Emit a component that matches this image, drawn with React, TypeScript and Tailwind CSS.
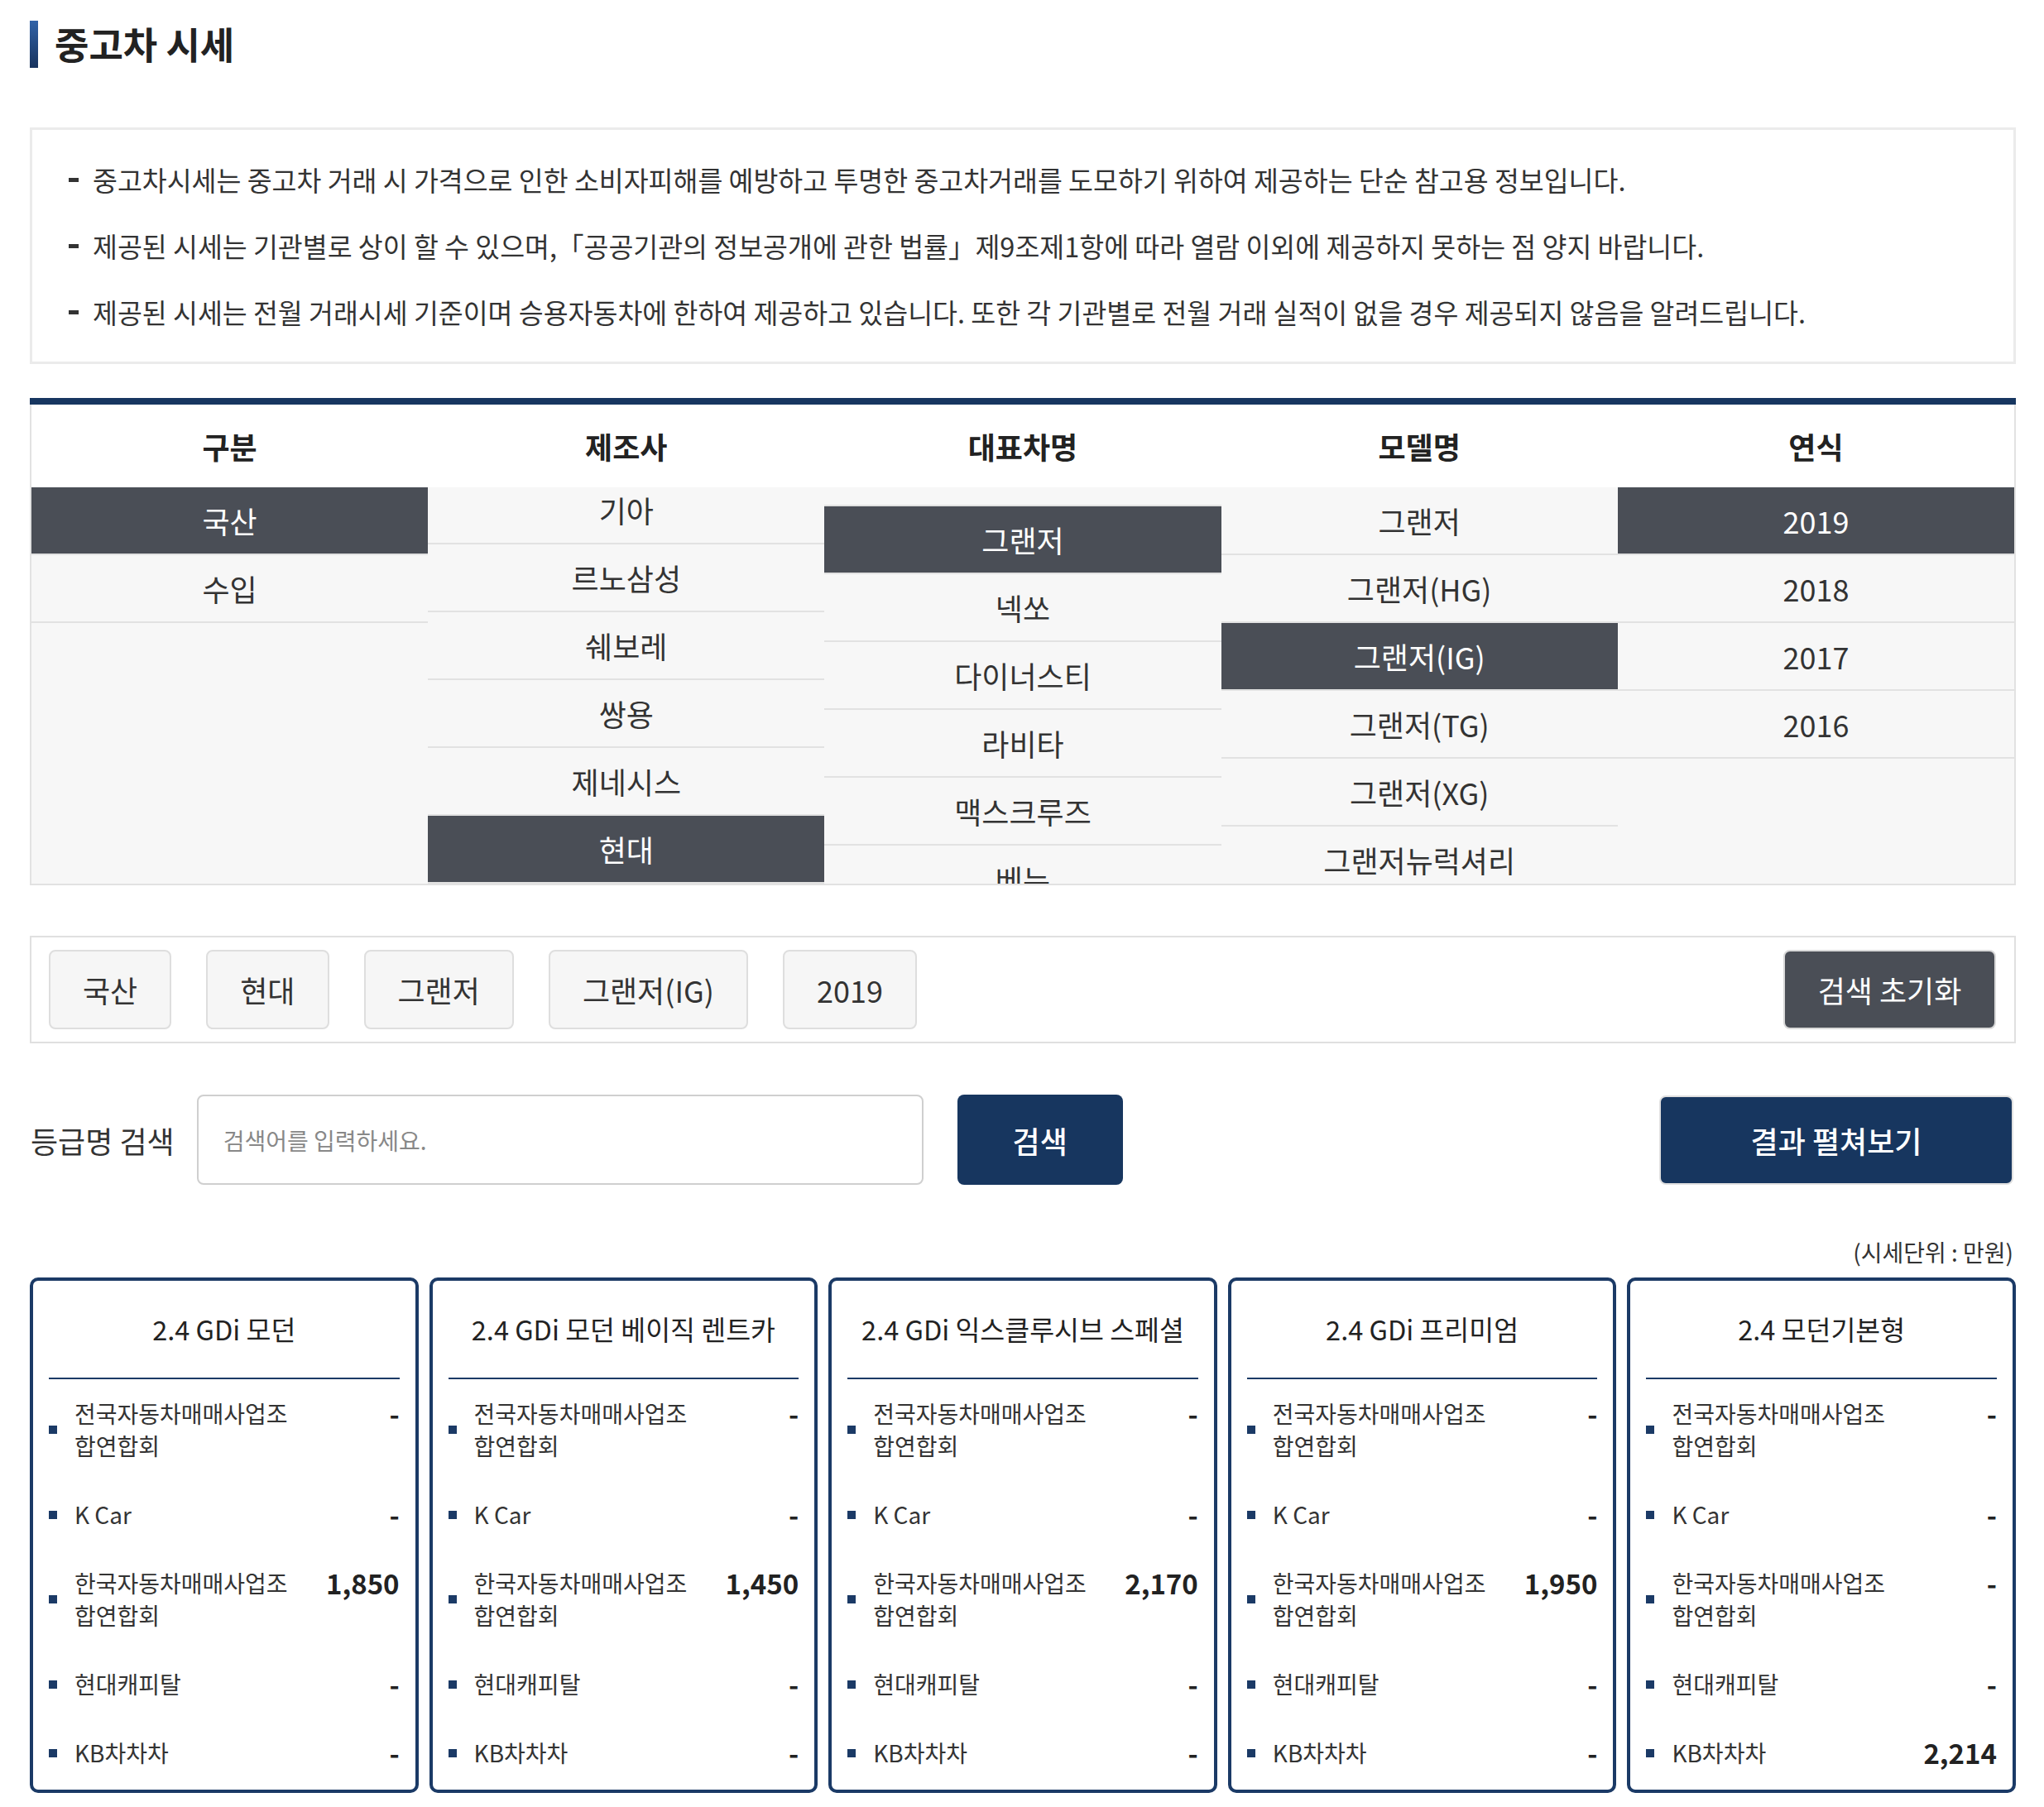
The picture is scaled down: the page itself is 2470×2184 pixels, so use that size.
import React from "react";

type Col = { title: string; offset: string; items: string[]; selected: string };

const columns: Col[] = [
  { title: "구분", offset: "mt-0", items: ["국산", "수입"], selected: "국산" },
  { title: "제조사", offset: "-mt-[13px]", items: ["기아", "르노삼성", "쉐보레", "쌍용", "제네시스", "현대"], selected: "현대" },
  {
    title: "대표차명",
    offset: "-mt-[59px]",
    items: ["그랜드스타렉스", "그랜저", "넥쏘", "다이너스티", "라비타", "맥스크루즈", "베뉴"],
    selected: "그랜저",
  },
  {
    title: "모델명",
    offset: "mt-0",
    items: ["그랜저", "그랜저(HG)", "그랜저(IG)", "그랜저(TG)", "그랜저(XG)", "그랜저뉴럭셔리"],
    selected: "그랜저(IG)",
  },
  { title: "연식", offset: "mt-0", items: ["2019", "2018", "2017", "2016"], selected: "2019" },
];

const notices = [
  "중고차시세는 중고차 거래 시 가격으로 인한 소비자피해를 예방하고 투명한 중고차거래를 도모하기 위하여 제공하는 단순 참고용 정보입니다.",
  "제공된 시세는 기관별로 상이 할 수 있으며,「공공기관의 정보공개에 관한 법률」제9조제1항에 따라 열람 이외에 제공하지 못하는 점 양지 바랍니다.",
  "제공된 시세는 전월 거래시세 기준이며 승용자동차에 한하여 제공하고 있습니다. 또한 각 기관별로 전월 거래 실적이 없을 경우 제공되지 않음을 알려드립니다.",
];

const chips = ["국산", "현대", "그랜저", "그랜저(IG)", "2019"];

const sources = ["전국자동차매매사업조합연합회", "K Car", "한국자동차매매사업조합연합회", "현대캐피탈", "KB차차차"];

const cards = [
  { title: "2.4 GDi 모던", values: ["-", "-", "1,850", "-", "-"] },
  { title: "2.4 GDi 모던 베이직 렌트카", values: ["-", "-", "1,450", "-", "-"] },
  { title: "2.4 GDi 익스클루시브 스페셜", values: ["-", "-", "2,170", "-", "-"] },
  { title: "2.4 GDi 프리미엄", values: ["-", "-", "1,950", "-", "-"] },
  { title: "2.4 모던기본형", values: ["-", "-", "-", "-", "2,214"] },
];

export default function App() {
  return (
    <div className="w-[2470px] min-h-[2184px] bg-white font-['Noto_Sans_CJK_KR','Noto_Sans',sans-serif] text-[#333]">
      <div className="ml-[36px] w-[2400px] pt-[25px] pb-[14px]">
        {/* Title */}
        <div className="flex items-center h-[57px]">
          <div className="w-[10px] h-[57px] bg-linear-to-b from-[#3163a8] to-[#18335e]" />
          <h1 className="ml-[20px] -mt-[2px] text-[45px] font-bold leading-none text-[#222]">중고차 시세</h1>
        </div>

        {/* Notice */}
        <div className="mt-[72px] border-[3px] border-[#ebebeb] px-[44px] py-[20px]">
          {notices.map((n) => (
            <div key={n} className="flex items-center leading-[80px] text-[32.5px]">
              <span className="w-[12px] h-[5px] bg-[#333] shrink-0" />
              <span className="ml-[17px]">{n}</span>
            </div>
          ))}
        </div>

        {/* Category selector */}
        <div className="mt-[41px]">
          <div className="h-[8px] bg-[#173660]" />
          <div className="border-x-2 border-b-2 border-[#e2e2e2]">
            <div className="grid grid-cols-5 h-[100px] bg-white">
              {columns.map((c) => (
                <div key={c.title} className="flex items-center justify-center text-[36px] font-bold text-[#222] leading-none">
                  {c.title}
                </div>
              ))}
            </div>
            <div className="grid grid-cols-5 h-[479px] bg-[#f7f7f7]">
              {columns.map((c) => (
                <div key={c.title} className="overflow-hidden">
                  <div className={c.offset}>
                    {c.items.map((it) => (
                      <div
                        key={it}
                        className={
                          it === c.selected
                            ? "h-[82px] border-b-2 border-[#e2e2e2] bg-[#4a4e56] text-white flex items-center justify-center text-[36px] leading-none"
                            : "h-[82px] border-b-2 border-[#e2e2e2] text-[#333] flex items-center justify-center text-[36px] leading-none"
                        }
                      >
                        {it}
                      </div>
                    ))}
                  </div>
                </div>
              ))}
            </div>
          </div>
        </div>

        {/* Selected chips */}
        <div className="mt-[61px] h-[130px] border-2 border-[#e0e0e0] flex items-center justify-between pl-[21px] pr-[22px]">
          <div className="flex gap-[42px]">
            {chips.map((c) => (
              <div
                key={c}
                className="h-[96px] px-[39px] rounded-[8px] border-2 border-[#dedede] bg-[#f6f6f6] flex items-center text-[36px] leading-none text-[#333]"
              >
                {c}
              </div>
            ))}
          </div>
          <button className="h-[96px] w-[257px] rounded-[8px] border-2 border-[#d9d9d9] bg-[#4a4e56] text-white text-[36px] leading-none">
            검색 초기화
          </button>
        </div>

        {/* Search */}
        <div className="mt-[62px] flex items-center h-[109px]">
          <span className="text-[36px] leading-none text-[#333] ml-[1px]">등급명 검색</span>
          <input
            className="ml-[27px] w-[878px] h-[109px] border-2 border-[#cfcfcf] rounded-[8px] px-[30px] text-[28px] outline-none placeholder:text-[#888]"
            placeholder="검색어를 입력하세요."
          />
          <button className="ml-[41px] w-[200px] h-[109px] rounded-[8px] bg-[#17365f] text-white text-[36px] font-medium leading-none">
            검색
          </button>
          <button className="ml-auto mr-[3px] w-[428px] h-[108px] rounded-[8px] border-2 border-[#e0e0e0] bg-[#17365f] text-white text-[36px] font-medium leading-none">
            결과 펼쳐보기
          </button>
        </div>

        <div className="mt-[63px] pr-[3px] text-right text-[28px] leading-[36px] text-[#333]">(시세단위 : 만원)</div>

        {/* Cards */}
        <div className="mt-[13px] grid grid-cols-5 gap-[13px]">
          {cards.map((card) => (
            <div key={card.title} className="h-[623px] border-[4px] border-[#1b3a66] rounded-[10px] px-[19px]">
              <div className="h-[119px] flex items-center justify-center text-[32.5px] leading-none text-[#222] border-b-2 border-[#1b3a66]">
                {card.title}
              </div>
              {sources.map((s, i) => (
                <div key={s} className="flex items-center py-[22px]">
                  <span className="w-[10px] h-[10px] bg-[#1b3a66] shrink-0" />
                  <span className="ml-[21px] w-[264px] text-[28px] leading-[39px] break-all text-[#333]">{s}</span>
                  <span className="ml-auto self-start text-[33px] font-bold leading-[39px] text-[#222]">{card.values[i]}</span>
                </div>
              ))}
            </div>
          ))}
        </div>
      </div>
    </div>
  );
}
